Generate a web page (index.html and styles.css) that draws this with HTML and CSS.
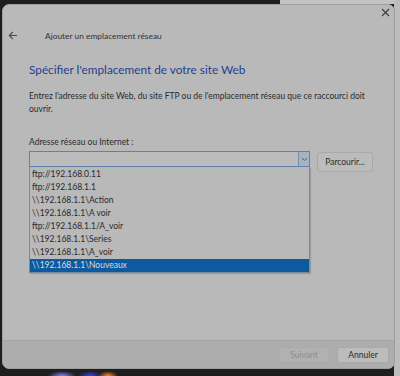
FILE: index.html
```html
<!DOCTYPE html>
<html lang="fr">
<head>
    <meta charset="UTF-8">
    <title>Ajouter un emplacement réseau</title>
    <link rel="stylesheet" href="styles.css">
</head>
<body>
    <div class="desktop">
        <div class="dialog">
            <!-- Title bar -->
            <div class="titlebar">
                <svg class="close" width="9" height="9" viewBox="0 0 9 9">
                    <path d="M1 1 L8 8 M8 1 L1 8" stroke="#3c3c3c" stroke-width="1.1" fill="none"/>
                </svg>
            </div>

            <!-- Wizard nav -->
            <div class="nav">
                <svg class="back" width="10" height="9" viewBox="0 0 10 9">
                    <path d="M9 4.5 H1.5 M4.8 1 L1.3 4.5 L4.8 8" stroke="#4a4a4a" stroke-width="1.1" fill="none"/>
                </svg>
                <span class="nav-title">Ajouter un emplacement réseau</span>
            </div>

            <!-- Main content -->
            <div class="content">
                <h1>Spécifier l'emplacement de votre site Web</h1>
                <p class="intro">Entrez l'adresse du site Web, du site FTP ou de l'emplacement réseau que ce raccourci doit ouvrir.</p>
                <div class="label">Adresse réseau ou Internet :</div>

                <div class="field-row">
                    <div class="combo">
                        <div class="combo-box">
                            <span class="combo-input"></span>
                            <span class="combo-btn">
                                <svg width="7" height="5" viewBox="0 0 7 5">
                                    <path d="M1 1 L3.5 3.5 L6 1" stroke="#505a66" stroke-width="1" fill="none"/>
                                </svg>
                            </span>
                        </div>
                        <ul class="combo-list">
                            <li>ftp://192.168.0.11</li>
                            <li>ftp://192.168.1.1</li>
                            <li>\\192.168.1.1\Action</li>
                            <li>\\192.168.1.1\A voir</li>
                            <li>ftp://192.168.1.1/A_voir</li>
                            <li>\\192.168.1.1\Series</li>
                            <li>\\192.168.1.1\A_voir</li>
                            <li class="selected">\\192.168.1.1\Nouveaux</li>
                        </ul>
                    </div>
                    <button class="btn browse">Parcourir...</button>
                </div>
            </div>

            <!-- Footer -->
            <div class="footer">
                <button class="btn" disabled>Suivant</button>
                <button class="btn">Annuler</button>
            </div>
        </div>
    </div>
</body>
</html>
```

FILE: styles.css
```css
* {
    margin: 0;
    padding: 0;
    box-sizing: border-box;
}

body {
    width: 400px;
    height: 376px;
    overflow: hidden;
    font-family: Lato, 'Open Sans', sans-serif;
    font-size: 8.5px;
    color: #2e2e2e;
    background:
        radial-gradient(ellipse 14px 5px at 62px 376px, #7d86f2, transparent),
        radial-gradient(ellipse 12px 5px at 90px 376px, #3443ee, transparent),
        radial-gradient(ellipse 10px 5px at 108px 376px, #ff8a2e, transparent),
        linear-gradient(to right, transparent 394px, #bdbdbd 394px),
        linear-gradient(to bottom, #c4c4c4 4px, transparent 4px) 280px 0 / 120px 4px no-repeat,
        #1e1e1e;
}

.desktop {
    padding: 4px 0 0 2px;
}

/* Dialog window */
.dialog {
    width: 393px;
    height: 365px;
    display: flex;
    flex-direction: column;
    background: #b9b9b9;
    border: 1px solid #9e9e9e;
    border-radius: 7px;
    overflow: hidden;
}

.titlebar {
    height: 20px;
    display: flex;
    justify-content: flex-end;
    padding: 3px 4px 0 0;
}

.nav {
    height: 21px;
    display: flex;
    align-items: center;
    padding-left: 5px;
}

.back {
    margin-right: 27px;
}

.nav-title {
    color: #333;
    font-size: 8.4px;
}

/* Content */
.content {
    flex: 1;
    padding: 16px 0 0 26px;
}

h1 {
    font-weight: normal;
    font-size: 11.8px;
    color: #24408e;
    line-height: 16px;
}

.intro {
    margin-top: 12px;
    width: 340px;
    line-height: 13px;
    color: #2b2b2b;
}

.label {
    margin-top: 20px;
    line-height: 13px;
    color: #2b2b2b;
}

.field-row {
    display: flex;
    align-items: flex-start;
    gap: 7px;
    margin-top: 2px;
}

.combo {
    width: 281px;
}

.combo-box {
    height: 16px;
    display: flex;
    border: 1px solid #5f82ac;
    background: #bcbcbc;
}

.combo-input {
    flex: 1;
}

.combo-btn {
    width: 11px;
    display: flex;
    align-items: center;
    justify-content: center;
    background: #a8b3c1;
    border-left: 1px solid #6f8db0;
}

.combo-list {
    list-style: none;
    height: 106px;
    border: 1px solid #7b8a9a;
    border-top: none;
    padding-top: 1px;
    box-shadow: 1px 1px 1px rgba(0, 0, 0, 0.15);
}

.combo-list li {
    height: 13px;
    line-height: 13px;
    padding-left: 2px;
    color: #2a2a2a;
    white-space: nowrap;
}

.combo-list li.selected {
    background: #0d5a9e;
    color: #d8dde5;
}

/* Buttons */
.btn {
    font-family: inherit;
    font-size: 8.5px;
    color: #2b2b2b;
    background: #bcbcbc;
    border: 1px solid #a9a9a9;
    border-radius: 3px;
    height: 16px;
}

.browse {
    width: 56px;
    height: 20px;
    margin-top: 1px;
}

.footer {
    height: 28px;
    display: flex;
    justify-content: flex-end;
    align-items: center;
    gap: 7px;
    padding-right: 5px;
    background: #adadad;
    border-top: 1px solid #a6a6a6;
}

.footer .btn {
    width: 52px;
}

.btn:disabled {
    color: #8e8e8e;
    background: #b1b1b1;
    border-color: #aaaaaa;
}
```
